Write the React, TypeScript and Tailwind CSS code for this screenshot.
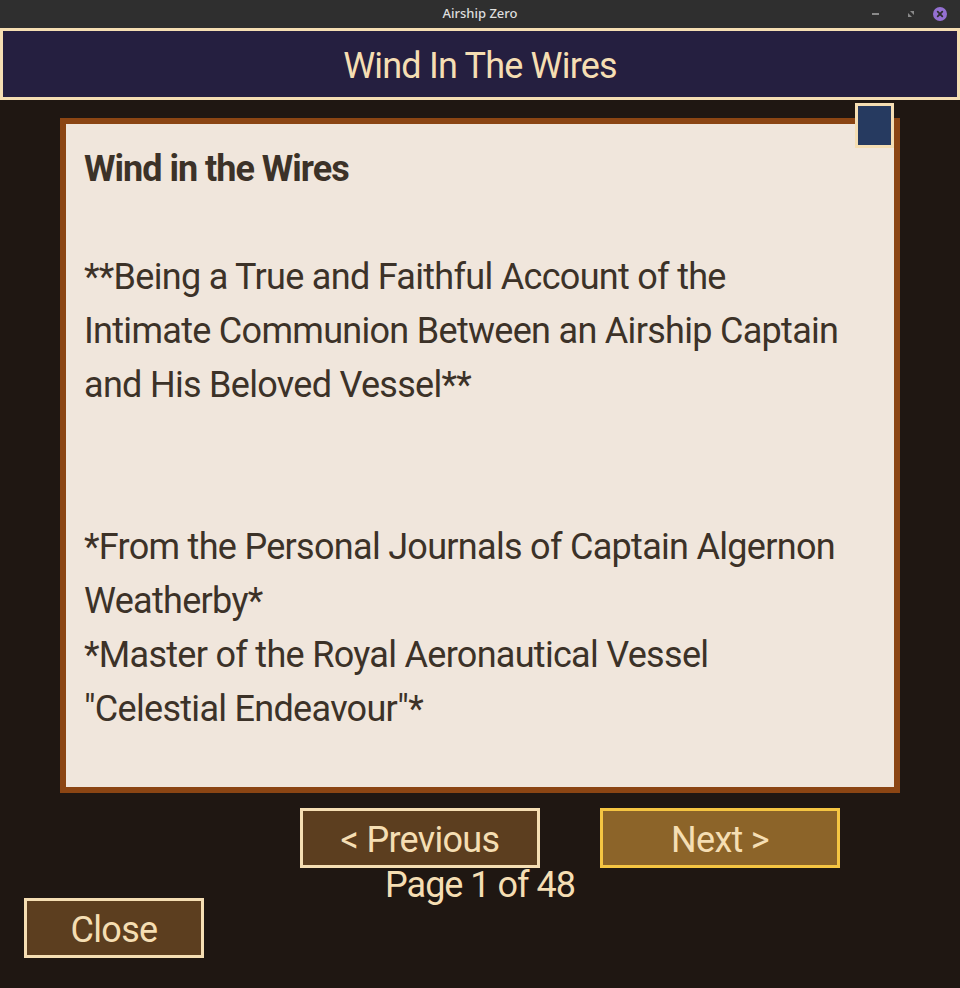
const bodyLines = [
  '',
  '**Being a True and Faithful Account of the',
  'Intimate Communion Between an Airship Captain',
  'and His Beloved Vessel**',
  '',
  '',
  '*From the Personal Journals of Captain Algernon',
  'Weatherby*',
  '*Master of the Royal Aeronautical Vessel',
  '"Celestial Endeavour"*',
];

const TitleBar = () => (
  <div className="relative h-[28px] bg-[#2f2f2f] flex items-center justify-center">
    <span className="text-[13px] font-medium text-[#dedede] font-['Noto_Sans',sans-serif]">
      Airship Zero
    </span>
    <div className="absolute right-[13px] top-[7px] flex items-center gap-[13px]">
      <div className="w-[7px] h-[2px] bg-[#8a8a8a]" />
      <svg width="14" height="14" viewBox="0 0 14 14" className="ml-[12px]">
        <path d="M6 4 L10 4 L10 8 Z" fill="#8a8a8a" />
        <path d="M4 6 L4 10 L8 10 Z" fill="#8a8a8a" />
      </svg>
      <svg width="14" height="14" viewBox="0 0 14 14" className="ml-[2px]">
        <circle cx="7" cy="7" r="7" fill="#9470d2" />
        <path d="M4.7 4.7 L9.3 9.3 M9.3 4.7 L4.7 9.3" stroke="#2f2f2f" strokeWidth="1.8" strokeLinecap="round" />
      </svg>
    </div>
  </div>
);

const Button = ({ label, variant }: { label: string; variant: 'dark' | 'gold' }) => (
  <button
    className={
      variant === 'gold'
        ? 'h-[60px] pt-[4px] border-[3px] border-[#f5c542] bg-[#8c6429] text-[#f5deb3] text-[36px] tracking-[-0.7px] leading-none'
        : 'h-[60px] pt-[4px] border-[3px] border-[#f5deb3] bg-[#5c3e1f] text-[#f5deb3] text-[36px] tracking-[-0.7px] leading-none'
    }
  >
    {label}
  </button>
);

export default function App() {
  return (
    <div className="w-[960px] h-[988px] bg-[#1f1712] font-['Roboto',sans-serif] overflow-hidden">
      <TitleBar />

      <div className="h-[72px] pt-[4px] border-[3px] border-[#f5deb3] bg-[#251f40] flex items-center justify-center">
        <h1 className="text-[36px] text-[#f5deb3] tracking-[-0.8px] leading-none">Wind In The Wires</h1>
      </div>

      <div className="relative mt-[18px] mx-[60px] h-[675px] border-[6px] border-[#8b4513] bg-[#f0e6dc] pt-[18px] pl-[18px] text-[#3c3228]">
        <div className="text-[36px] leading-[54px] h-[54px] font-bold tracking-[-1px]">Wind in the Wires</div>
        {bodyLines.map((line, i) => (
          <div key={i} className="text-[36px] leading-[54px] h-[54px] tracking-[-0.7px] whitespace-nowrap">
            {line}
          </div>
        ))}
        <div className="absolute left-[789px] top-[-21px] w-[39px] h-[45px] border-[3px] border-[#f5deb3] bg-[#263a60]" />
      </div>

      <div className="mt-[15px] pl-[300px] flex gap-[60px]">
        <div className="w-[240px] flex flex-col">
          <Button label="< Previous" variant="dark" />
        </div>
        <div className="w-[240px] flex flex-col">
          <Button label="Next >" variant="gold" />
        </div>
      </div>

      <div className="mt-[3px] h-[28px] leading-[28px] text-center text-[36px] text-[#f5deb3] tracking-[-1px]">
        Page 1 of 48
      </div>

      <div className="-mt-px ml-[24px] w-[180px] flex flex-col">
        <Button label="Close" variant="dark" />
      </div>
    </div>
  );
}
